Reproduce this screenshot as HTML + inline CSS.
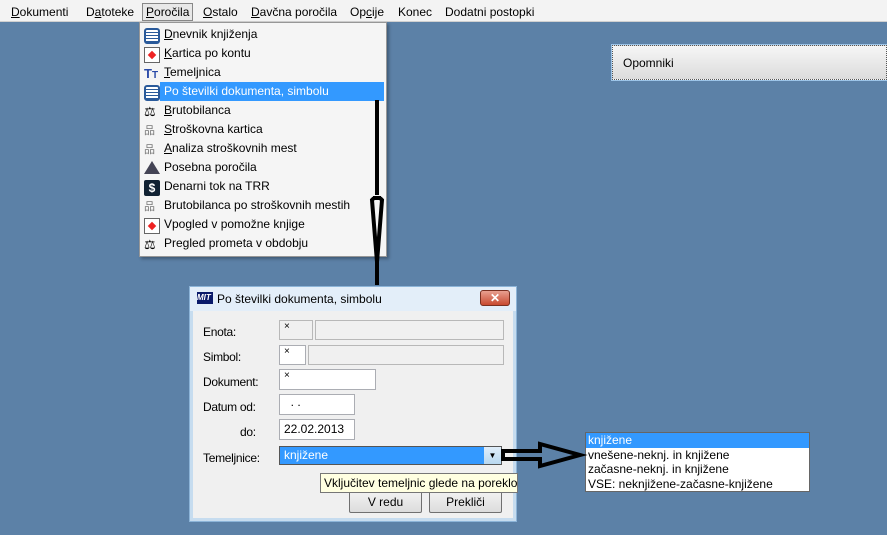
<!DOCTYPE html>
<html><head><meta charset="utf-8"><style>
*{margin:0;padding:0;box-sizing:border-box}
body{width:887px;height:535px;background:#5c81a7;font-family:"Liberation Sans",sans-serif;font-size:12px;position:relative;overflow:hidden;color:#000}
.abs{position:absolute}
#mb{left:0;top:0;width:887px;height:22px;background:#f3f3f3;border-bottom:1px solid #d0d0d0}
#mb span{position:absolute;top:5px}
#menu{left:139px;top:22px;width:248px;height:235px;background:#f5f5f5;border:1px solid #979797;box-shadow:2px 2px 3px rgba(0,0,0,.3)}
.mi{position:absolute;left:24px;height:19px;line-height:19px;width:222px;padding-left:0}
.ic{position:absolute;left:4px;width:16px;height:16px}
.hl{background:#3399ff;color:#fff;left:20px;padding-left:4px;width:224px}
#dlg{left:189px;top:286px;width:328px;height:236px;background:#f0f0f0;border:1px solid #8cb4d8;box-shadow:0 0 0 3px #c6dcef inset}
#tb{left:0;top:0;width:326px;height:24px;background:#e3eef9}
.in{position:absolute;background:#fff;border:1px solid #abadb3;font-size:10px;padding-left:4px}
.dis{background:#f0f0f0;border-color:#b8b8b8}
.lb{position:absolute;font-size:12px;letter-spacing:-.3px}
.btn{position:absolute;height:22px;border:1px solid #707070;border-radius:2px;background:linear-gradient(#f2f2f2,#dcdcdc);text-align:center;line-height:20px}
</style></head><body>
<div id="mb" class="abs">
<span style="left:11px"><u>D</u>okumenti</span>
<span style="left:86px">D<u>a</u>toteke</span>
<span style="left:142px;top:3px;border:1px solid #888;padding:1px 3px;background:#e8e8e8"><u>P</u>oročila</span>
<span style="left:203px"><u>O</u>stalo</span>
<span style="left:251px"><u>D</u>avčna poročila</span>
<span style="left:350px">Op<u>c</u>ije</span>
<span style="left:398px">Konec</span>
<span style="left:445px">Dodatni postopki</span>
</div>
<div id="menu" class="abs">
<div class="ic" style="top:5px;border:2px solid #2a5a9a;border-radius:3px;background:repeating-linear-gradient(#fff 0 2px,#2a5a9a 2px 3px)"></div>
<div class="mi" style="top:2px"><u>D</u>nevnik knjiženja</div>
<div class="ic" style="top:24px;border:1px solid #666;background:#fff"><div style="margin:4px;width:6px;height:6px;background:#e22;transform:rotate(45deg)"></div></div>
<div class="mi" style="top:21px"><u>K</u>artica po kontu</div>
<div class="ic" style="top:43px;color:#2a4aa8;font-weight:bold;font-size:13px;line-height:16px">T<span style="font-size:10px">T</span></div>
<div class="mi" style="top:40px"><u>T</u>emeljnica</div>
<div class="ic" style="top:62px;border:2px solid #2a5a9a;border-radius:3px;background:repeating-linear-gradient(#fff 0 2px,#2a5a9a 2px 3px)"></div>
<div class="mi hl" style="top:59px">Po številki dokumenta, simbolu</div>
<div class="ic" style="top:81px;font-size:13px;line-height:16px">⚖</div>
<div class="mi" style="top:78px"><u>B</u>rutobilanca</div>
<div class="ic" style="top:100px;color:#777;font-size:11px;line-height:16px">品</div>
<div class="mi" style="top:97px"><u>S</u>troškovna kartica</div>
<div class="ic" style="top:119px;color:#777;font-size:11px;line-height:16px">品</div>
<div class="mi" style="top:116px"><u>A</u>naliza stroškovnih mest</div>
<div class="ic" style="top:138px;width:0;height:0;border-left:8px solid transparent;border-right:8px solid transparent;border-bottom:13px solid #445"></div>
<div class="mi" style="top:135px">Posebna poročila</div>
<div class="ic" style="top:157px;background:#123;color:#fff;border-radius:2px;text-align:center;font-weight:bold;line-height:16px">$</div>
<div class="mi" style="top:154px">Denarni tok na TRR</div>
<div class="ic" style="top:176px;color:#777;font-size:11px;line-height:16px">品</div>
<div class="mi" style="top:173px">Brutobilanca po stroškovnih mestih</div>
<div class="ic" style="top:195px;border:1px solid #666;background:#fff"><div style="margin:4px;width:6px;height:6px;background:#e22;transform:rotate(45deg)"></div></div>
<div class="mi" style="top:192px">Vpogled v pomožne knjige</div>
<div class="ic" style="top:214px;font-size:13px;line-height:16px">⚖</div>
<div class="mi" style="top:211px">Pregled prometa v obdobju</div>
</div>
<div class="abs" style="left:612px;top:45px;width:275px;height:35px;background:linear-gradient(#f6f6f6,#dcdcdc);border:1px dotted #555;box-shadow:0 0 0 1px #9cc4e8"><span style="position:absolute;left:10px;top:10px">Opomniki</span></div>
<div id="dlg" class="abs">
<div id="tb" class="abs">
<div class="abs" style="left:7px;top:5px;width:16px;height:12px;background:#0a1a6a;color:#fff;font-size:8px;font-weight:bold;line-height:12px;font-style:italic">MIT</div>
<div class="abs" style="left:27px;top:5px">Po številki dokumenta, simbolu</div>
<div class="abs" style="left:290px;top:3px;width:30px;height:16px;background:linear-gradient(#e8a090,#c84a30);border:1px solid #7a3020;border-radius:3px;color:#fff;text-align:center;font-weight:bold;line-height:14px">✕</div>
</div>
<div class="lb" style="left:13px;top:38px">Enota:</div>
<div class="in dis" style="left:89px;top:33px;width:34px;height:20px">×</div>
<div class="in dis" style="left:125px;top:33px;width:189px;height:20px"></div>
<div class="lb" style="left:13px;top:63px">Simbol:</div>
<div class="in" style="left:89px;top:58px;width:27px;height:20px">×</div>
<div class="in dis" style="left:118px;top:58px;width:196px;height:20px"></div>
<div class="lb" style="left:13px;top:88px">Dokument:</div>
<div class="in" style="left:89px;top:82px;width:97px;height:21px">×</div>
<div class="lb" style="left:13px;top:113px">Datum od:</div>
<div class="in" style="left:89px;top:107px;width:76px;height:21px;font-size:12px">&nbsp; . .</div>
<div class="lb" style="left:50px;top:138px">do:</div>
<div class="in" style="left:89px;top:132px;width:76px;height:21px;font-size:12px;line-height:19px">22.02.2013</div>
<div class="lb" style="left:13px;top:164px">Temeljnice:</div>
<div class="in" style="left:89px;top:159px;width:223px;height:19px;background:#3399ff;color:#fff;font-size:12px;line-height:17px;border-color:#555">knjižene
<div class="abs" style="right:0;top:0;width:17px;height:17px;background:linear-gradient(#e0eefa,#b8d8f0);color:#000;font-size:8px;text-align:center;line-height:17px">▼</div></div>
<div class="btn" style="left:159px;top:204px;width:73px">V redu</div>
<div class="btn" style="left:239px;top:204px;width:73px">Prekliči</div>
</div>
<div class="abs" style="left:320px;top:473px;width:198px;height:20px;background:#ffffe1;border:1px solid #767676;line-height:18px;padding-left:3px;white-space:nowrap;overflow:hidden">Vključitev temeljnic glede na poreklo</div>
<div class="abs" style="left:585px;top:432px;width:225px;height:60px;background:#fff;border:1px solid #666;line-height:14.5px">
<div style="background:#3399ff;color:#fff;padding-left:2px">knjižene</div>
<div style="padding-left:2px">vnešene-neknj. in knjižene</div>
<div style="padding-left:2px">začasne-neknj. in knjižene</div>
<div style="padding-left:2px">VSE: neknjižene-začasne-knjižene</div>
</div>
<svg class="abs" style="left:0;top:0" width="887" height="535">
<g fill="none" stroke="#000" stroke-width="4">
<path d="M377 100 V195 M374 198 L372 200 L377 262 L382 200 L380 198"/>
<path d="M373 198 H381 M377 262 V285"/>
<path d="M503 451 H540 V444 L580 455 L540 466 V459 H503 Z"/>
</g>
</svg>
</body></html>
